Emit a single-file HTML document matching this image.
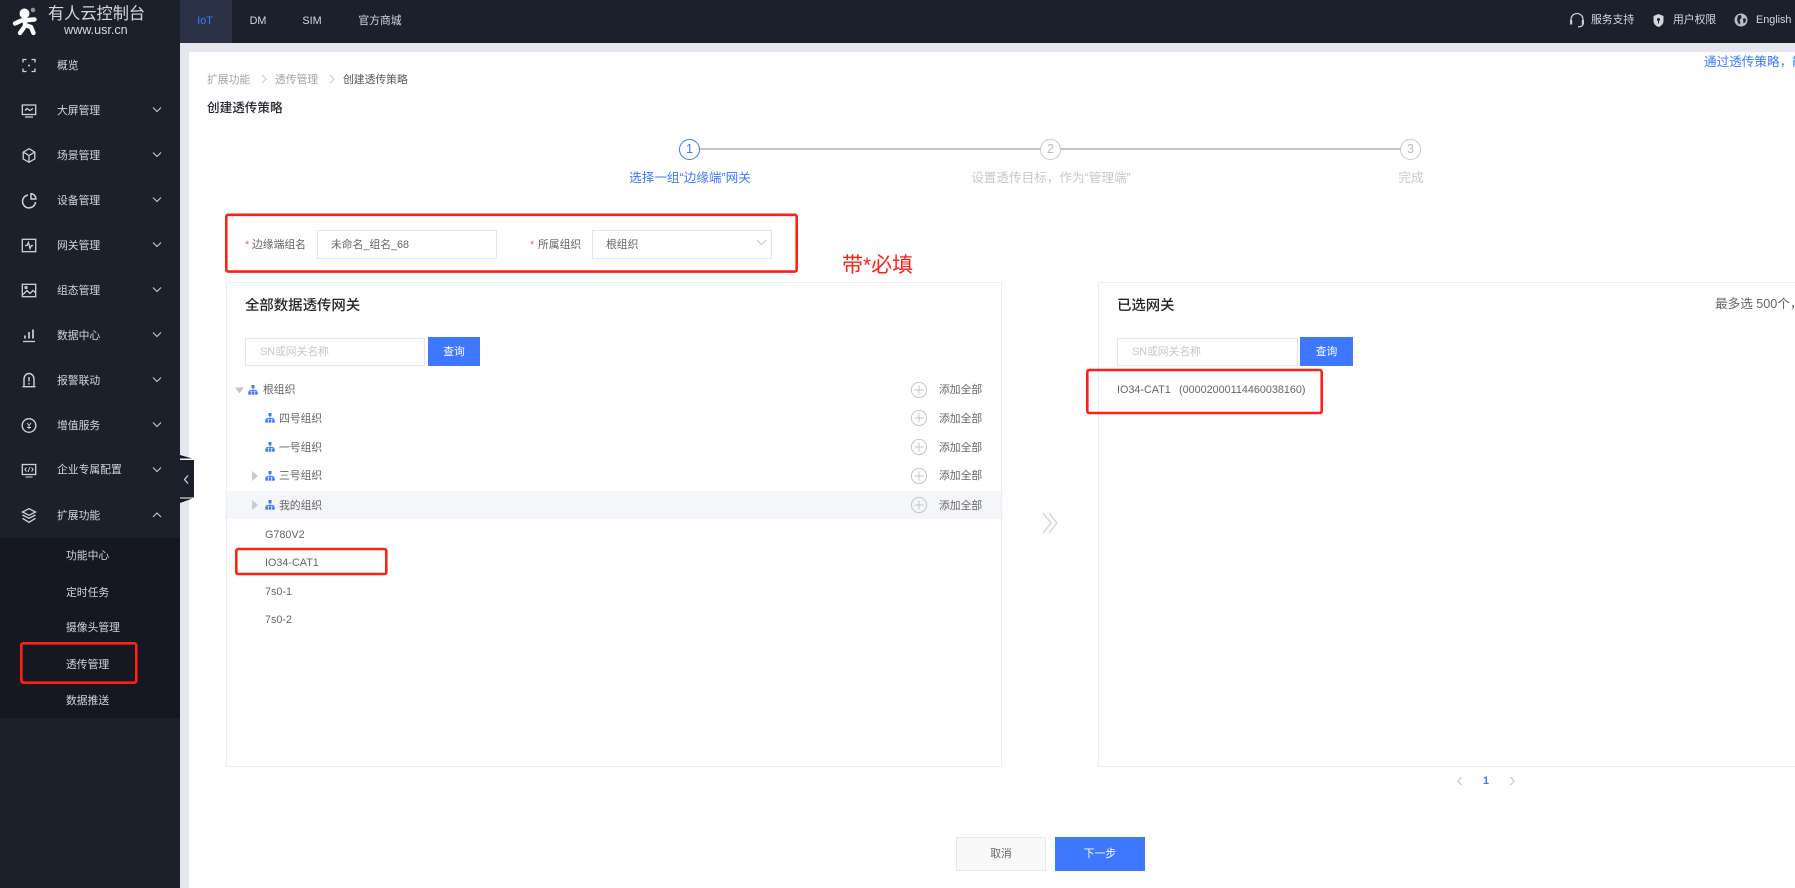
<!DOCTYPE html>
<html lang="zh">
<head>
<meta charset="utf-8">
<title>创建透传策略</title>
<style>
html,body{margin:0;padding:0;background:#fff}
body{position:relative;width:1795px;height:888px;overflow:hidden;font-family:"Liberation Sans","Noto Sans CJK SC",sans-serif;font-size:10.8px;color:#666}
.b{position:absolute;box-sizing:border-box}
.t{position:absolute;line-height:20px;height:20px;white-space:nowrap}
.c{transform:translateX(-50%)}
.side{color:#d2d5db}
.sub{color:#d2d5db}
.h{font-weight:500;font-size:14.4px;color:#22252b}
.inp{background:#fff;border:1px solid #e4e6ef}
.ph{color:#c5c8ce}
.btn{background:#3d78ff;color:#fff;text-align:center}
svg{position:absolute;left:0;top:0}
</style>
</head>
<body>
<!-- backgrounds -->
<div class="b" style="left:180px;top:43px;width:1615px;height:845px;background:#e4e7ee"></div>
<div class="b" style="left:189px;top:52px;width:1606px;height:836px;background:#fff"></div>
<div class="b" style="left:0;top:0;width:180px;height:888px;background:#1c202b"></div>
<div class="b" style="left:0;top:538px;width:180px;height:180px;background:#151821"></div>
<div class="b" style="left:180px;top:0;width:1615px;height:43px;background:#1b202c"></div>
<div class="b" style="left:180px;top:0;width:52px;height:43px;background:#2b3146"></div>

<!-- header -->
<div class="t" style="left:48px;top:4px;font-size:16.2px;color:#d6d8dc">有人云控制台</div>
<div class="t" style="left:64px;top:20px;font-size:12.6px;color:#d6d8dc">www.usr.cn</div>
<div class="t c" style="left:205px;top:11px;color:#3d78ff">IoT</div>
<div class="t c" style="left:258px;top:11px;color:#d6d8de">DM</div>
<div class="t c" style="left:312px;top:11px;color:#d6d8de">SIM</div>
<div class="t c" style="left:380px;top:11px;color:#d6d8de">官方商城</div>
<div class="t" style="left:1591px;top:10px;color:#d6d8de">服务支持</div>
<div class="t" style="left:1673px;top:10px;color:#d6d8de">用户权限</div>
<div class="t" style="left:1756px;top:10px;color:#d6d8de">English</div>

<!-- sidebar -->
<div class="t side" style="left:57px;top:56px">概览</div>
<div class="t side" style="left:57px;top:101px">大屏管理</div>
<div class="t side" style="left:57px;top:146px">场景管理</div>
<div class="t side" style="left:57px;top:191px">设备管理</div>
<div class="t side" style="left:57px;top:236px">网关管理</div>
<div class="t side" style="left:57px;top:281px">组态管理</div>
<div class="t side" style="left:57px;top:326px">数据中心</div>
<div class="t side" style="left:57px;top:371px">报警联动</div>
<div class="t side" style="left:57px;top:416px">增值服务</div>
<div class="t side" style="left:57px;top:460px">企业专属配置</div>
<div class="t side" style="left:57px;top:506px">扩展功能</div>
<div class="t sub" style="left:66px;top:546px">功能中心</div>
<div class="t sub" style="left:66px;top:583px">定时任务</div>
<div class="t sub" style="left:66px;top:618px">摄像头管理</div>
<div class="t sub" style="left:66px;top:655px">透传管理</div>
<div class="t sub" style="left:66px;top:691px">数据推送</div>

<!-- collapse handle -->
<div class="b" style="left:180px;top:460px;width:14px;height:38px;background:#1b1f2b"></div>

<!-- breadcrumbs -->
<div class="t" style="left:207px;top:70px;color:#a0a3a9">扩展功能</div>
<div class="t" style="left:275px;top:70px;color:#a0a3a9">透传管理</div>
<div class="t" style="left:343px;top:70px;color:#55585e">创建透传策略</div>
<div class="t" style="left:207px;top:98px;font-size:12.6px;font-weight:500;color:#22252b">创建透传策略</div>
<div class="t" style="left:1704px;top:52px;font-size:12.6px;color:#3d78ff;width:91px;overflow:hidden">通过透传策略，能够</div>

<!-- steps -->
<div class="b" style="left:700px;top:148px;width:340px;height:2px;background:#c2c5ce"></div>
<div class="b" style="left:1061px;top:148px;width:339px;height:2px;background:#c2c5ce"></div>
<div class="b" style="left:679px;top:139px;width:21px;height:21px;border-radius:50%;border:1px solid #3d78ff;color:#3d78ff;font-size:12.6px;line-height:19px;text-align:center">1</div>
<div class="b" style="left:1040px;top:139px;width:21px;height:21px;border-radius:50%;border:1px solid #c5c8ce;color:#b8bbc2;font-size:12.6px;line-height:19px;text-align:center">2</div>
<div class="b" style="left:1400px;top:139px;width:21px;height:21px;border-radius:50%;border:1px solid #c5c8ce;color:#b8bbc2;font-size:12.6px;line-height:19px;text-align:center">3</div>
<div class="t c" style="left:690px;top:168px;font-size:12.6px;color:#3d78ff">选择一组“边缘端”网关</div>
<div class="t c" style="left:1051px;top:168px;font-size:12.6px;color:#c5c8ce">设置透传目标，作为“管理端”</div>
<div class="t c" style="left:1411px;top:168px;font-size:12.6px;color:#c5c8ce">完成</div>

<!-- form -->
<div class="t" style="left:245px;top:235px;color:#f0616a">*</div>
<div class="t" style="left:252px;top:235px">边缘端组名</div>
<div class="b inp" style="left:317px;top:230px;width:180px;height:29px"></div>
<div class="t" style="left:331px;top:235px">未命名_组名_68</div>
<div class="t" style="left:530px;top:235px;color:#f0616a">*</div>
<div class="t" style="left:538px;top:235px">所属组织</div>
<div class="b inp" style="left:592px;top:230px;width:180px;height:29px"></div>
<div class="t" style="left:606px;top:235px">根组织</div>
<div class="t" style="left:842px;top:252px;font-size:21px;color:#ff1f14;line-height:28px;height:28px">带*必填</div>

<!-- left panel -->
<div class="b" style="left:226px;top:282px;width:776px;height:485px;border:1px solid #ebedf4"></div>
<div class="t h" style="left:245px;top:296px">全部数据透传网关</div>
<div class="b inp" style="left:245px;top:338px;width:180px;height:28px"></div>
<div class="t ph" style="left:260px;top:342px">SN或网关名称</div>
<div class="b btn" style="left:428px;top:337px;width:52px;height:29px;line-height:31px">查询</div>

<div class="b" style="left:227px;top:491px;width:774px;height:28px;background:#f5f6fa"></div>
<div class="t" style="left:263px;top:380px">根组织</div>
<div class="t" style="left:279px;top:409px">四号组织</div>
<div class="t" style="left:279px;top:438px">一号组织</div>
<div class="t" style="left:279px;top:466px">三号组织</div>
<div class="t" style="left:279px;top:496px">我的组织</div>
<div class="t" style="left:939px;top:380px">添加全部</div>
<div class="t" style="left:939px;top:409px">添加全部</div>
<div class="t" style="left:939px;top:438px">添加全部</div>
<div class="t" style="left:939px;top:466px">添加全部</div>
<div class="t" style="left:939px;top:496px">添加全部</div>
<div class="t" style="left:265px;top:525px">G780V2</div>
<div class="t" style="left:265px;top:553px">IO34-CAT1</div>
<div class="t" style="left:265px;top:582px">7s0-1</div>
<div class="t" style="left:265px;top:610px">7s0-2</div>

<!-- right panel -->
<div class="b" style="left:1098px;top:282px;width:720px;height:485px;border:1px solid #ebedf4"></div>
<div class="t h" style="left:1117px;top:296px">已选网关</div>
<div class="t" style="left:1715px;top:294px;font-size:12.6px;width:80px;overflow:hidden">最多选 500个，</div>
<div class="b inp" style="left:1117px;top:338px;width:181px;height:28px"></div>
<div class="t ph" style="left:1132px;top:342px">SN或网关名称</div>
<div class="b btn" style="left:1300px;top:337px;width:53px;height:29px;line-height:31px">查询</div>
<div class="t" style="left:1117px;top:380px;font-size:10.8px">IO34-CAT1</div>
<div class="t" style="left:1179px;top:380px;font-size:10.8px">(00002000114460038160)</div>

<!-- pagination -->
<div class="t c" style="left:1486px;top:771px;color:#3d78ff;font-weight:bold">1</div>

<!-- footer buttons -->
<div class="b" style="left:956px;top:837px;width:90px;height:34px;background:#f9f9f9;border:1px solid #e7e8ee;line-height:33px;text-align:center;color:#666">取消</div>
<div class="b btn" style="left:1055px;top:837px;width:90px;height:34px;line-height:35px">下一步</div>

<!-- graphics overlay -->
<svg width="1795" height="888" viewBox="0 0 1795 888">
  <!-- logo -->
  <g fill="none" stroke="#fff" stroke-width="4.400" stroke-linecap="round" stroke-linejoin="round">
    <circle cx="24.500" cy="13.500" r="5" fill="#fff" stroke="none"/>
    <path d="M15 23.500 L21.500 20.500 L34.500 19.500"/>
    <path d="M25 20 L25 26 L20 33"/>
    <path d="M25 25 L31 27 L33.500 33"/>
  </g>
  <circle cx="33" cy="10" r="2.300" fill="#8f939b"/>

  <!-- sidebar icons -->
  <g fill="none" stroke="#cfd2d8" stroke-width="1.300">
    <g transform="translate(29,65.500)"><path d="M-6 -3V-6H-2.500M2.500 -6H6V-3M6 3V6H2.500M-2.500 6H-6V3"/><circle r="1" fill="#cfd2d8" stroke="none"/></g>
    <g transform="translate(29,110.500)"><rect x="-6.700" y="-5.500" width="13.400" height="9.500"/><path d="M-4 0L-2 -2L1 0L4 -2M-4 6.500H4" /></g>
    <g transform="translate(29,155.500)"><path d="M0 -6.800L5.800 -3.400V3.400L0 6.800L-5.800 3.400V-3.400ZM-5.800 -3.400L0 0L5.800 -3.400M0 0V6.800"/></g>
    <g transform="translate(29,200.500)" stroke-width="1.500"><path d="M-1 -5.500A6.500 6.500 0 1 0 6.500 1.500"/><path d="M2 -6.800A5 5 0 0 1 6.800 -1.500H2Z"/></g>
    <g transform="translate(29,245.500)"><rect x="-6.700" y="-6.200" width="13.400" height="12.400"/><path d="M-4 0H-2L-0.500 -3L1 3L2.500 0H4"/></g>
    <g transform="translate(29,290.500)"><rect x="-6.700" y="-6.200" width="13.400" height="12.400"/><path d="M-6 4L-2 0L1 3L4 0L6.500 2"/><circle cx="-3" cy="-3" r="1"/></g>
    <g transform="translate(29,335.500)" stroke-width="1.700"><path d="M-4 0V3M0 -3.500V3M4 -6V3"/><path d="M-6 6H6" stroke-width="1.300"/></g>
    <g transform="translate(29,380.500)" stroke-width="1.400"><path d="M-5 6V-1.500A5 5.500 0 0 1 5 -1.500V6M-6.500 6.200H6.500"/><path d="M0 -3.500V1M0 2.500V4"/></g>
    <g transform="translate(29,425.500)" stroke-width="1.400"><circle r="6.800"/><path d="M-2 -2.500L0 0L2 -2.500M-2 2H2M0 0V3.500" stroke-width="1"/></g>
    <g transform="translate(29,470.500)"><rect x="-6.700" y="-6" width="13.400" height="10"/><path d="M-2.500 -3L-4.200 -1L-2.500 1M2.500 -3L4.200 -1L2.500 1M1 -3.500L-1 1.500M-3.500 6.500H3.500" stroke-width="1"/></g>
    <g transform="translate(29,515.500)" stroke-width="1.300"><path d="M0 -6.800L6.500 -3.500L0 -0.200L-6.500 -3.500ZM-6.500 -0.500L0 2.800L6.500 -0.500M-6.500 2.800L0 6.800L6.500 2.800"/></g>
  </g>
  <!-- sidebar chevrons -->
  <g fill="none" stroke="#cfd2d8" stroke-width="1">
    <path d="M153 107.500l4 4l4 -4M153 152.500l4 4l4 -4M153 197.500l4 4l4 -4M153 242.500l4 4l4 -4M153 287.500l4 4l4 -4M153 332.500l4 4l4 -4M153 377.500l4 4l4 -4M153 422.500l4 4l4 -4M153 467.500l4 4l4 -4"/>
    <path d="M153 517l4 -4l4 4"/>
  </g>

  <!-- collapse handle wedges -->
  <path d="M180 455L194 459H180Z" fill="#15181f"/>
  <path d="M180 498H194L180 503Z" fill="#15181f"/>
  <path d="M180 459H194M180 498H194" stroke="#fff" stroke-width="1"/>
  <path d="M188 475.500L184.500 479.500L188 483.500" fill="none" stroke="#d8dae0" stroke-width="1.200"/>

  <!-- header icons -->
  <g fill="none" stroke="#c9ccd3" stroke-width="1.300">
    <path d="M1571 23V19.500A6 6 0 0 1 1583 19.500V23"/>
    <rect x="1570" y="20" width="2.200" height="4.500" fill="#c9ccd3" stroke="none"/>
    <rect x="1581.800" y="20" width="2.200" height="4.500" fill="#c9ccd3" stroke="none"/>
    <path d="M1583 24.500Q1582 27 1578 26.800"/>
  </g>
  <path d="M1658.500 14L1663.500 16V21C1663.500 24 1661 26 1658.500 27C1656 26 1653.500 24 1653.500 21V16Z" fill="#d2d5db"/>
  <circle cx="1658.500" cy="19.500" r="1.500" fill="#1b202c"/><rect x="1658" y="20" width="1" height="3.500" fill="#1b202c"/>
  <circle cx="1741" cy="20" r="6.500" fill="#b9bcc4"/>
  <path d="M1738 15.500L1741 15L1741.500 18L1739.500 20L1740.500 23L1739 24.500L1737 20ZM1743 18.500L1746 18.500L1745.500 22L1743.500 23.500Z" fill="#1b202c"/>

  <!-- breadcrumbs chevrons -->
  <g fill="none" stroke="#c5c8ce" stroke-width="1">
    <path d="M262 75l4 4l-4 4M330 75l4 4l-4 4"/>
  </g>

  <!-- select chevron -->
  <path d="M757 240l4.500 4.500l4.500 -4.500" fill="none" stroke="#c5c8ce" stroke-width="1"/>

  <!-- tree carets -->
  <path d="M235 387.500H244L239.500 393.500Z" fill="#c3c6cd"/>
  <path d="M252 471V481L258 476ZM252 500V510L258 505Z" fill="#c8cbd2"/>

  <!-- tree org icons -->
  <defs>
    <g id="org" fill="#3d78ff">
      <rect x="-1.500" y="-5" width="3" height="3.200"/>
      <rect x="-0.400" y="-2" width="0.800" height="2.500"/>
      <rect x="-3.800" y="0" width="7.600" height="0.900"/>
      <rect x="-4.700" y="1.300" width="2.600" height="3.400"/>
      <rect x="-1.300" y="1.300" width="2.600" height="3.400"/>
      <rect x="2.100" y="1.300" width="2.600" height="3.400"/>
    </g>
    <g id="plus" fill="none" stroke="#c3c5ca" stroke-width="1">
      <circle r="7.600"/>
      <path d="M-4.500 0H4.500M0 -4.500V4.500"/>
    </g>
  </defs>
  <use href="#org" x="253" y="390"/>
  <use href="#org" x="270" y="418"/>
  <use href="#org" x="270" y="447"/>
  <use href="#org" x="270" y="476"/>
  <use href="#org" x="270" y="505"/>
  <use href="#plus" x="919" y="390"/>
  <use href="#plus" x="919" y="418"/>
  <use href="#plus" x="919" y="447"/>
  <use href="#plus" x="919" y="476"/>
  <use href="#plus" x="919" y="505"/>

  <!-- >> -->
  <path d="M1043 513L1051 523L1043 533M1049 513L1057 523L1049 533" fill="none" stroke="#d8dae0" stroke-width="1.600"/>

  <!-- pagination chevrons -->
  <path d="M1461.500 777L1458 781L1461.500 785M1510.500 777L1514 781L1510.500 785" fill="none" stroke="#c5c8ce" stroke-width="1.300"/>

  <!-- red annotation boxes -->
  <g fill="none" stroke="#ff1f14" stroke-width="2.600">
    <rect x="226.300" y="214.800" width="570.400" height="56.800" rx="2"/>
    <rect x="236.300" y="549" width="150" height="25" rx="2"/>
    <rect x="21.300" y="643.300" width="115" height="39.400" rx="2"/>
    <rect x="1087.300" y="370" width="234.400" height="43" rx="2"/>
  </g>
</svg>
</body>
</html>
